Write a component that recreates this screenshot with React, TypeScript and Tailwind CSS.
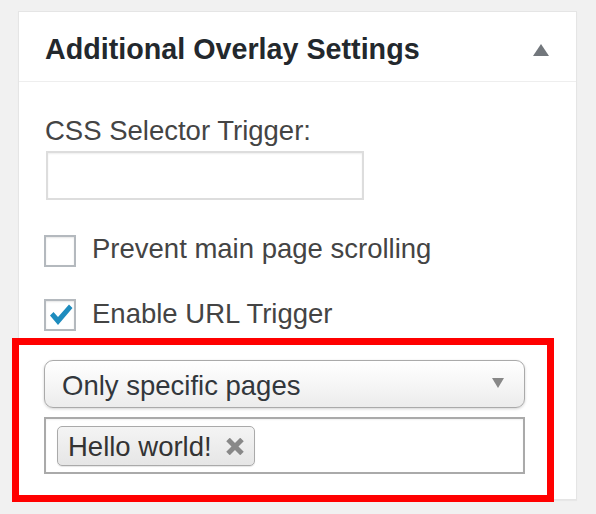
import React from "react";

const font = { fontFamily: '"Liberation Sans", Arial, sans-serif' };

function Checkbox({ checked }: { checked?: boolean }) {
  return (
    <div className="w-[32px] h-[32px] shrink-0 border-2 border-[#b4b9be] bg-white shadow-[inset_0_1px_2px_rgba(0,0,0,0.1)] relative">
      {checked && (
        <svg className="absolute left-[-2px] top-[-2px]" width="32" height="32" viewBox="0 0 32 32">
          <polygon points="6,16.5 9.5,13 14,18 25,5.5 28.5,9 14,26" fill="#1e8cbe" />
        </svg>
      )}
    </div>
  );
}

export default function App() {
  return (
    <div className="relative w-[596px] h-[514px] bg-[#f1f1f1] pt-[11px] pl-[18px]" style={font}>
      <div className="w-[559px] h-[489px] bg-white border border-[#e5e5e5] shadow-[0_1px_1px_rgba(0,0,0,0.04)]">
        <div className="flex items-start justify-between pl-[26px] pr-[27px] pt-[20px] pb-[15px] border-b border-[#eeeeee]">
          <h2 className="text-[28.7px] leading-[34px] font-bold text-[#23282d]">Additional Overlay Settings</h2>
          <svg className="mt-[12px]" width="16" height="12" viewBox="0 0 16 12">
            <polygon points="8,0 16,12 0,12" fill="#72777c" />
          </svg>
        </div>
        <div className="pl-[25px] pr-[50px] pt-[33px]">
          <div className="text-[27.5px] leading-[32px] text-[#444] pl-[1px]">CSS Selector Trigger:</div>
          <div className="mt-[4px] ml-[2px] w-[318px] h-[49px] border-2 border-[#dddddd] bg-white shadow-[inset_0_1px_2px_rgba(0,0,0,0.07)]" />
          <div className="mt-[35px] flex items-start gap-[16px]">
            <Checkbox />
            <span className="text-[27.5px] leading-[32px] text-[#444] -mt-[2px]">Prevent main page scrolling</span>
          </div>
          <div className="mt-[32px] flex items-start gap-[16px]">
            <Checkbox checked />
            <span className="text-[27.5px] leading-[32px] text-[#444] -mt-[1px]">Enable URL Trigger</span>
          </div>
          <div className="mt-[29px] w-[481px] h-[48px] rounded-[9px] border-[1.5px] border-[#aaaaaa] bg-gradient-to-b from-[#ffffff] via-[#f6f6f6] to-[#ececec] shadow-[0_1px_3px_rgba(0,0,0,0.18)] flex items-center justify-between pl-[17px] pr-[20px]">
            <span className="text-[27.5px] leading-[32px] text-[#32373c] pt-[4px]">Only specific pages</span>
            <svg width="12" height="10" viewBox="0 0 12 10" className="-mt-[2px]">
              <polygon points="0,0 12,0 6,10" fill="#888888" />
            </svg>
          </div>
          <div className="mt-[9px] w-[481px] h-[57px] border-2 border-[#aaaaaa] bg-white shadow-[inset_0_1px_2px_rgba(0,0,0,0.06)] pl-[11px] pt-[7px]">
            <div className="inline-flex items-center h-[40px] rounded-[5px] border-[1.5px] border-[#aaaaaa] bg-gradient-to-b from-[#f4f4f4] to-[#e6e6e6] shadow-[0_1px_1px_rgba(0,0,0,0.1)] pl-[10px] pr-[10px]">
              <span className="text-[27.5px] leading-[32px] text-[#333] pt-[1px]">Hello world!</span>
              <svg className="ml-[14px] mt-[1px]" width="18" height="17" viewBox="0 0 18 17">
                <line x1="2" y1="1.5" x2="16" y2="15.5" stroke="#888" strokeWidth="5" />
                <line x1="16" y1="1.5" x2="2" y2="15.5" stroke="#888" strokeWidth="5" />
              </svg>
            </div>
          </div>
        </div>
      </div>
      <div className="absolute left-[12px] top-[338px] w-[542px] h-[164px] border-[7px] border-[#ff0000]" />
    </div>
  );
}
